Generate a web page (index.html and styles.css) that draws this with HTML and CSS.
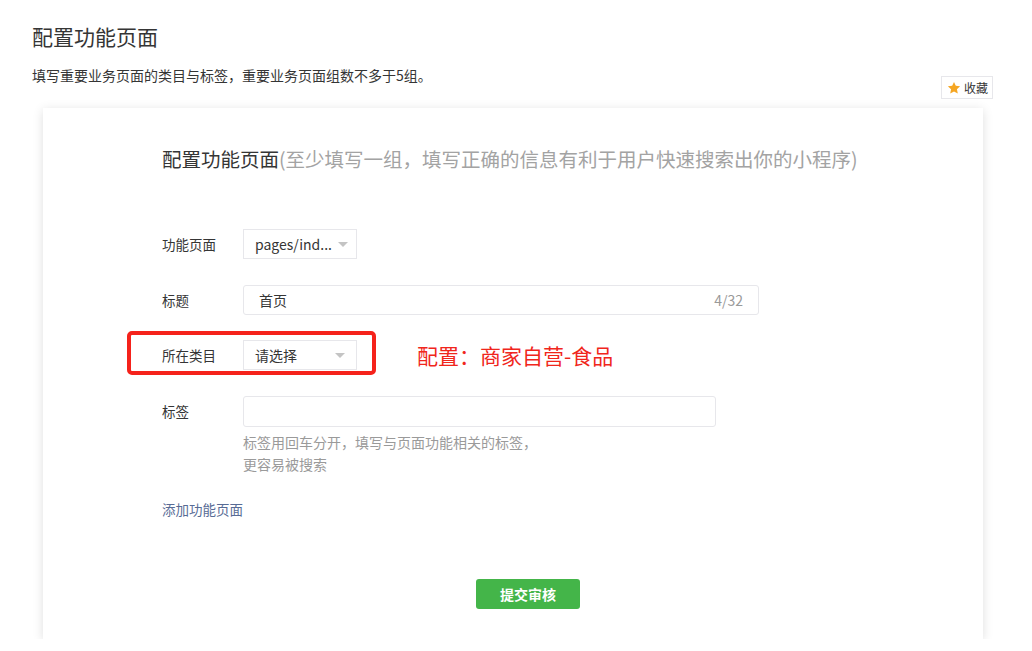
FILE: index.html
```html
<!DOCTYPE html>
<html lang="zh-CN">
<head>
    <meta charset="UTF-8">
    <title>配置功能页面</title>
    <link rel="stylesheet" href="styles.css">
</head>
<body>
    <div class="wrap">
        <h1 class="tit">配置功能页面</h1>
        <div class="top">
            <p class="desc">填写重要业务页面的类目与标签，重要业务页面组数不多于5组。</p>
            <div class="fav">
                <svg width="14" height="14" viewBox="0 0 24 24"><polygon points="12,1.5 15.1,8.3 22.5,9.1 17,14.1 18.5,21.5 12,17.8 5.5,21.5 7,14.1 1.5,9.1 8.9,8.3" fill="#f5a623"/></svg>
                <span>收藏</span>
            </div>
        </div>

        <div class="card">
            <h2 class="sub">配置功能页面<span>(至少填写一组，填写正确的信息有利于用户快速搜索出你的小程序)</span></h2>

            <div class="row">
                <label>功能页面</label>
                <div class="sel sel-pg">
                    <span>pages/ind...</span>
                    <i class="arr"></i>
                </div>
            </div>

            <div class="row">
                <label>标题</label>
                <div class="inp inp-tit">
                    <span>首页</span>
                    <em>4/32</em>
                </div>
            </div>

            <div class="row mark">
                <label>所在类目</label>
                <div class="sel">
                    <span>请选择</span>
                    <i class="arr"></i>
                </div>
                <div class="note">配置：商家自营-食品</div>
                <div class="box"></div>
            </div>

            <div class="row row-tag">
                <label>标签</label>
                <div class="tag">
                    <div class="inp inp-tag"></div>
                    <p class="tip">标签用回车分开，填写与页面功能相关的标签，<br>更容易被搜索</p>
                </div>
            </div>

            <a class="add" href="#">添加功能页面</a>

            <div class="ctrl">
                <button>提交审核</button>
            </div>
        </div>
    </div>
</body>
</html>
```

FILE: styles.css
```css
body {
    margin: 0;
    background: #fff;
    font-family: "Noto Sans CJK SC", "Noto Sans", sans-serif;
    color: #353535;
}

.wrap {
    width: 961px;
    padding: 22px 0 0 32px;
}

.tit {
    margin: 0;
    font-size: 21px;
    font-weight: normal;
    line-height: 28px;
}

.top {
    display: flex;
    justify-content: space-between;
    align-items: flex-start;
    margin-top: 15px;
}

.desc {
    margin: 0;
    font-size: 14px;
    line-height: 20px;
}

.fav {
    margin-top: 11px;
    height: 21px;
    padding: 0 4px 0 5px;
    border: 1px solid #e7e7eb;
    background: #fff;
    display: flex;
    align-items: center;
    gap: 3px;
    font-size: 12px;
}

.card {
    margin: 9px 0 0 11px;
    width: 940px;
    box-sizing: border-box;
    padding: 37px 0 30px 119px;
    background: #fff;
    box-shadow: 0 2px 10px rgba(0,0,0,0.13);
}

.sub {
    margin: 0;
    font-size: 19.5px;
    font-weight: normal;
    line-height: 28px;
    color: #353535;
}

.sub span {
    color: #a3a3a3;
}

.row {
    display: flex;
    align-items: center;
    margin-top: 26px;
    font-size: 14px;
}

.row:first-of-type {
    margin-top: 56px;
}

.row label {
    width: 81px;
    flex-shrink: 0;
    font-size: 13.5px;
    color: #353535;
}

.sel {
    width: 114px;
    height: 30px;
    box-sizing: border-box;
    border: 1px solid #e7e7eb;
    padding: 0 11px;
    display: flex;
    align-items: center;
    justify-content: space-between;
    color: #353535;
}

.sel-pg {
    padding-right: 8px;
}

.arr {
    width: 0;
    height: 0;
    border-left: 5px solid transparent;
    border-right: 5px solid transparent;
    border-top: 5px solid #c4c4c4;
}

.inp {
    height: 30px;
    box-sizing: border-box;
    border: 1px solid #e7e7eb;
    border-radius: 3px;
    padding: 0 15px;
    display: flex;
    align-items: center;
    justify-content: space-between;
}

.inp-tit {
    width: 516px;
}

.inp-tit em {
    font-style: normal;
    color: #9a9a9a;
}

.mark {
    position: relative;
    margin-top: 25px;
}

.note {
    margin-left: 60px;
    font-size: 21px;
    color: #f0261c;
    line-height: 28px;
}

.box {
    position: absolute;
    left: -35px;
    top: -9px;
    width: 249px;
    height: 44px;
    box-sizing: border-box;
    border: 4px solid #f5221b;
    border-radius: 5px;
}

.row-tag {
    align-items: flex-start;
}

.row-tag label {
    line-height: 30px;
}

.inp-tag {
    width: 473px;
    height: 31px;
}

.tip {
    margin: 4px 0 0;
    font-size: 14px;
    line-height: 22px;
    color: #9a9a9a;
}

.add {
    display: block;
    margin-top: 24px;
    font-size: 13.5px;
    line-height: 20px;
    color: #576b95;
    text-decoration: none;
}

.ctrl {
    margin-top: 60px;
    padding-left: 314px;
}

.ctrl button {
    width: 104px;
    height: 30px;
    border: none;
    border-radius: 3px;
    background: #44b549;
    color: #fff;
    font-family: inherit;
    font-size: 14px;
    font-weight: bold;
    cursor: pointer;
}
```
